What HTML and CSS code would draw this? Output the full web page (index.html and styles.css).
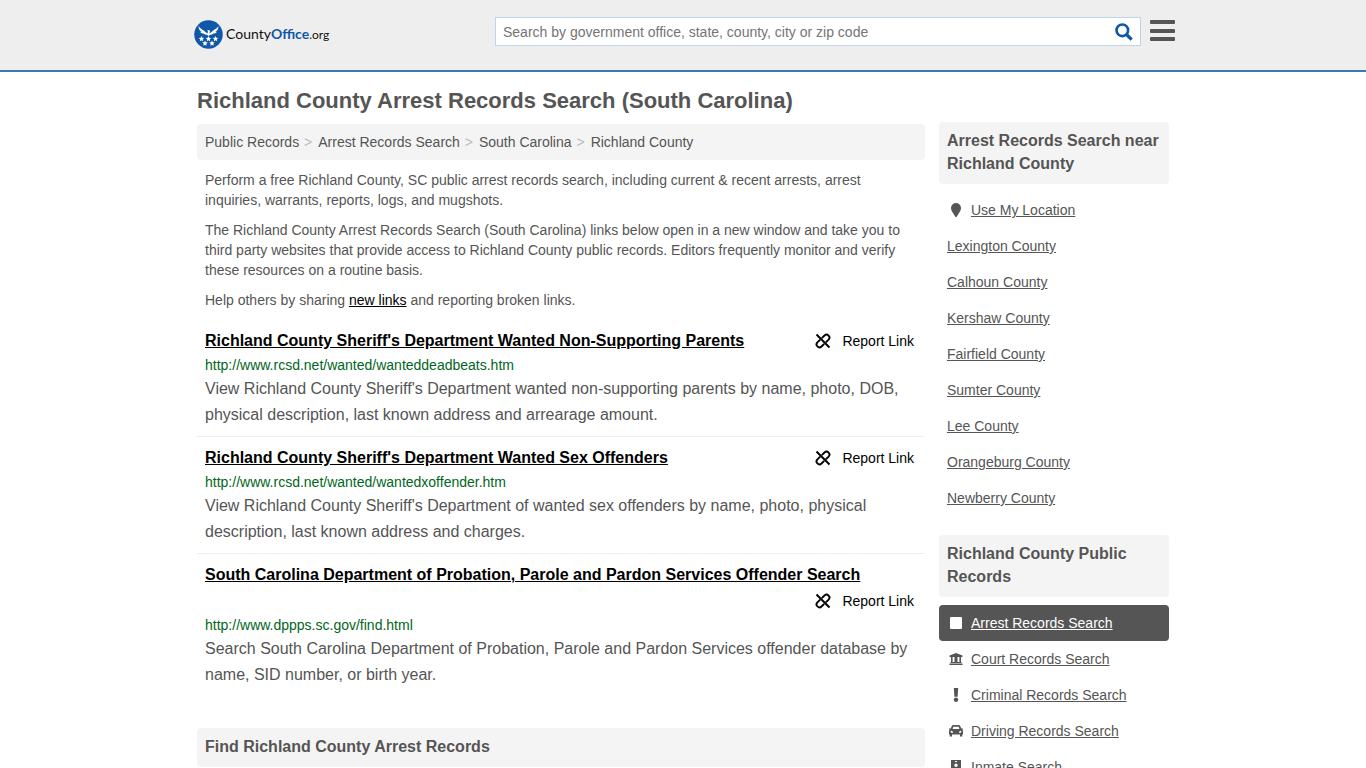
FILE: index.html
```html
<!DOCTYPE html>
<html lang="en">
<head>
    <meta charset="UTF-8">
    <meta name="viewport" content="width=device-width, initial-scale=1.0">
    <title>Richland County Arrest Records Search (South Carolina)</title>
    <link rel="stylesheet" href="styles.css">
</head>
<body>
    <svg class="sprite" aria-hidden="true">
        <symbol id="icon-unlink" viewBox="0 0 16 16">
            <g fill="none" stroke="currentColor" stroke-width="1.900">
                <path d="M1.500 1.500l13 13"/>
                <path d="M6.800 5.200l2.700-2.700a2.900 2.900 0 0 1 4.100 4.100L10.800 9.400"/>
                <path d="M9.200 10.800l-2.700 2.700a2.900 2.900 0 0 1-4.100-4.100L5.200 6.600"/>
            </g>
        </symbol>
    </svg>

    <header class="header">
        <div class="header-inner">
            <a class="logo" href="#" aria-label="CountyOffice.org">
                <svg class="logo-mark" viewBox="0 0 58 58" aria-hidden="true">
                    <circle cx="29" cy="29" r="28.500" fill="#0f57a8"/>
                    <g fill="#fff">
                        <path d="M9 12c3 6 10 7 14 12l4 3 1-4-2-2 4-1 2 2-1 5 4-3c4-5 11-6 14-12 0 6-2 9-6 11 1 1 2 1 3 0-2 4-5 4-7 4-2 2-4 3-6 2l-4 3-4-3c-2 1-4 0-6-2-2 0-5 0-7-4 1 1 2 1 3 0-4-2-6-5-6-11z"/>
                        <path id="star" d="M15 32l1.600 3.500 3.900.4-2.900 2.600.8 3.900-3.400-2-3.400 2 .8-3.900-2.900-2.600 3.900-.4z"/>
                        <use href="#star" x="14"/>
                        <use href="#star" x="28"/>
                        <use href="#star" x="7" y="9"/>
                        <use href="#star" x="21" y="9"/>
                    </g>
                </svg>
                <span class="logo-text">County<b>Office</b><span class="logo-org">.org</span></span>
            </a>
            <form class="search" role="search">
                <input type="search" class="search-input" aria-label="Search" placeholder="Search by government office, state, county, city or zip code">
                <button type="submit" class="search-btn" aria-label="Search">
                    <svg viewBox="0 0 18 18" aria-hidden="true"><g fill="none" stroke="currentColor"><circle cx="7.300" cy="7.300" r="5.800" stroke-width="2.600"/><path d="M11.500 11.500l5.200 5.200" stroke-width="3.200"/></g></svg>
                </button>
            </form>
            <button type="button" class="menu-btn" aria-label="Menu">
                <svg viewBox="0 0 25 22" fill="currentColor" aria-hidden="true"><rect width="25" height="4" rx="1"/><rect y="9" width="25" height="4" rx="1"/><rect y="17" width="25" height="4" rx="1"/></svg>
            </button>
        </div>
    </header>

    <div class="container">
        <main class="main">
            <h1>Richland County Arrest Records Search (South Carolina)</h1>
            <nav class="breadcrumb" aria-label="Breadcrumb">
                <a href="#">Public Records</a>
                <a href="#">Arrest Records Search</a>
                <a href="#">South Carolina</a>
                <a href="#">Richland County</a>
            </nav>
            <div class="intro">
                <p>Perform a free Richland County, SC public arrest records search, including current &amp; recent arrests, arrest inquiries, warrants, reports, logs, and mugshots.</p>
                <p>The Richland County Arrest Records Search (South Carolina) links below open in a new window and take you to third party websites that provide access to Richland County public records. Editors frequently monitor and verify these resources on a routine basis.</p>
                <p>Help others by sharing <a href="#">new links</a> and reporting broken links.</p>
            </div>

            <div class="listings">
                <article class="listing">
                    <div class="listing-head">
                        <h2><a href="#">Richland County Sheriff's Department Wanted Non-Supporting Parents</a></h2>
                        <a class="report" href="#"><svg aria-hidden="true"><use href="#icon-unlink"/></svg>Report Link</a>
                    </div>
                    <div class="listing-url">http://www.rcsd.net/wanted/wanteddeadbeats.htm</div>
                    <p>View Richland County Sheriff's Department wanted non-supporting parents by name, photo, DOB, physical description, last known address and arrearage amount.</p>
                </article>
                <article class="listing">
                    <div class="listing-head">
                        <h2><a href="#">Richland County Sheriff's Department Wanted Sex Offenders</a></h2>
                        <a class="report" href="#"><svg aria-hidden="true"><use href="#icon-unlink"/></svg>Report Link</a>
                    </div>
                    <div class="listing-url">http://www.rcsd.net/wanted/wantedxoffender.htm</div>
                    <p>View Richland County Sheriff's Department of wanted sex offenders by name, photo, physical description, last known address and charges.</p>
                </article>
                <article class="listing">
                    <div class="listing-head">
                        <h2><a href="#">South Carolina Department of Probation, Parole and Pardon Services Offender Search</a></h2>
                        <a class="report" href="#"><svg aria-hidden="true"><use href="#icon-unlink"/></svg>Report Link</a>
                    </div>
                    <div class="listing-url">http://www.dppps.sc.gov/find.html</div>
                    <p>Search South Carolina Department of Probation, Parole and Pardon Services offender database by name, SID number, or birth year.</p>
                </article>
            </div>

            <h2 class="box-title">Find Richland County Arrest Records</h2>
        </main>

        <aside class="sidebar">
            <section>
                <h2 class="box-title">Arrest Records Search near Richland County</h2>
                <ul class="side-list">
                    <li><svg viewBox="0 0 14 14" aria-hidden="true"><path fill="currentColor" d="M7 0a5 5 0 0 1 5 5c0 3-2 4.500-3.500 7.500Q7 15.500 5.500 12.500C4 9.500 2 8 2 5a5 5 0 0 1 5-5z"/></svg><a href="#">Use My Location</a></li>
                    <li><a href="#">Lexington County</a></li>
                    <li><a href="#">Calhoun County</a></li>
                    <li><a href="#">Kershaw County</a></li>
                    <li><a href="#">Fairfield County</a></li>
                    <li><a href="#">Sumter County</a></li>
                    <li><a href="#">Lee County</a></li>
                    <li><a href="#">Orangeburg County</a></li>
                    <li><a href="#">Newberry County</a></li>
                </ul>
            </section>
            <section>
                <h2 class="box-title">Richland County Public Records</h2>
                <ul class="side-list">
                    <li class="active"><svg viewBox="0 0 14 14" aria-hidden="true"><rect x="1" y="1" width="12" height="12" rx="1" fill="currentColor"/></svg><a href="#">Arrest Records Search</a></li>
                    <li><svg viewBox="0 0 14 14" aria-hidden="true"><path fill="currentColor" d="M7 1l6.500 2.500V5H.5V3.500zM2 5h1.600v5h1.900V5H7h1.500v5h1.900V5H12v5h.5v1h-11v-1H2zM6.200 5h1.600v5.500H6.200zM.5 11.600h13V13H.5z"/></svg><a href="#">Court Records Search</a></li>
                    <li><svg viewBox="0 0 14 14" aria-hidden="true"><path fill="currentColor" d="M4.800 0h4.400l-.6 8.700H5.400z"/><circle cx="7" cy="11.800" r="2.200" fill="currentColor"/></svg><a href="#">Criminal Records Search</a></li>
                    <li><svg viewBox="0 0 14 14" aria-hidden="true"><path fill="currentColor" fill-rule="evenodd" d="M4.500 1h5q1.300 0 1.800 1.200l1 2.300H14v1h-.9q.9.700.9 1.800V10.500h-.7v2H11v-2H3v2H.7v-2H0V7.300Q0 6.200.9 5.500H0v-1h1.700l1-2.300Q3.200 1 4.500 1zM4.400 2.800L3.600 5h6.800l-.8-2.200zM2.600 6.800a1 1 0 0 0 0 2h1.500q0-1.600-1.500-2zM11.400 6.800q-1.500.4-1.500 2h1.500a1 1 0 0 0 0-2z"/></svg><a href="#">Driving Records Search</a></li>
                    <li><svg viewBox="0 0 14 14" aria-hidden="true"><path fill="currentColor" fill-rule="evenodd" d="M2 0h10v14H2zM6 1v1h2V1zM7 3.500a1.700 1.700 0 1 0 0 3.400 1.700 1.700 0 0 0 0-3.400zM4 10h6q0-2-3-2t-3 2z"/></svg><a href="#">Inmate Search</a></li>
                </ul>
            </section>
        </aside>
    </div>
</body>
</html>
```
FILE: styles.css
```css
* {
    box-sizing: border-box;
}

body {
    margin: 0;
    background: #fff;
    color: #555;
    font-family: "Liberation Sans", Arial, sans-serif;
    font-size: 14px;
    line-height: 20px;
}

h1, h2, p, ul {
    margin: 0;
    padding: 0;
}

a {
    color: inherit;
}

button {
    display: flex;
    padding: 0;
    border: 0;
    background: none;
    cursor: pointer;
}

.sprite {
    display: none;
}

/* header */
.header {
    background: #eee;
    border-bottom: 2px solid #337ab7;
}

.header-inner {
    display: flex;
    align-items: flex-start;
    max-width: 984px;
    height: 70px;
    margin: 0 auto;
    padding-top: 17px;
}

.logo {
    display: flex;
    align-items: center;
    gap: 3px;
    margin: 3px auto 0 3px;
    color: #111;
    text-decoration: none;
}

.logo-mark {
    width: 29px;
    height: 29px;
}

.logo-text {
    font-family: Lato, sans-serif;
    font-size: 14px;
}

.logo-text b {
    color: #0f57a8;
}

.logo-org {
    font-size: 12px;
}

.search {
    display: flex;
    width: 646px;
    height: 29px;
    border: 1px solid #bcd5e8;
    background: #fff;
}

.search-input {
    flex: 1;
    min-width: 0;
    padding: 0 7px;
    border: 0;
    outline: 0;
    background: none;
    font-family: inherit;
    font-size: 14px;
}

.search-input::placeholder {
    color: #757575;
}

.search-btn {
    align-items: center;
    padding: 0 7px;
    color: #0f57a8;
}

.search-btn svg {
    width: 18px;
    height: 18px;
}

.menu-btn {
    margin: 3px 0 0 9px;
    color: #555;
}

.menu-btn svg {
    width: 25px;
    height: 22px;
}

/* columns */
.container {
    display: flex;
    gap: 14px;
    max-width: 972px;
    margin: 0 auto;
}

.main {
    flex: 1;
    min-width: 0;
    padding-top: 16px;
}

.sidebar {
    flex: 0 0 230px;
    padding-top: 50px;
}

h1 {
    margin-bottom: 10px;
    font-size: 22px;
    line-height: 26px;
}

.box-title {
    padding: 7px 8px 9px;
    border-radius: 4px;
    background: #f4f4f4;
    font-size: 16px;
    line-height: 23px;
}

.breadcrumb {
    padding: 8px;
    border-radius: 4px;
    background: #f4f4f4;
}

.breadcrumb a {
    text-decoration: none;
}

.breadcrumb a + a::before {
    content: ">";
    margin-right: 6px;
    margin-left: 1px;
    color: #bbb;
}

.intro {
    padding: 0 8px;
}

.intro p {
    margin: 10px 0;
}

.intro a {
    color: #000;
}

/* search results */
.listings {
    margin-bottom: 31px;
}

.listing {
    padding: 9px 8px 8px;
    border-bottom: 1px solid #eee;
}

.listing:last-child {
    border-bottom-color: transparent;
}

.listing-head {
    display: flex;
    flex-wrap: wrap;
    gap: 2px 12px;
    color: #000;
}

.listing h2 {
    font-size: 16px;
    line-height: 24px;
}

.report {
    display: flex;
    align-items: center;
    gap: 11px;
    margin-left: auto;
    padding: 1px 3px 1px 0;
    line-height: 22px;
    text-decoration: none;
}

.report svg {
    width: 16px;
    height: 16px;
}

.listing-url {
    margin-top: 1px;
    color: #006621;
    line-height: 22px;
}

.listing p {
    font-size: 16px;
    line-height: 26px;
}

/* sidebar lists */
.side-list {
    margin: 8px 0 19px;
    list-style: none;
}

.side-list li {
    display: flex;
    align-items: center;
    gap: 8px;
    padding: 8px;
    border-radius: 4px;
}

.side-list svg {
    width: 14px;
    height: 14px;
    margin-left: 2px;
}

.side-list .active {
    background: #555;
    color: #fff;
}
```
